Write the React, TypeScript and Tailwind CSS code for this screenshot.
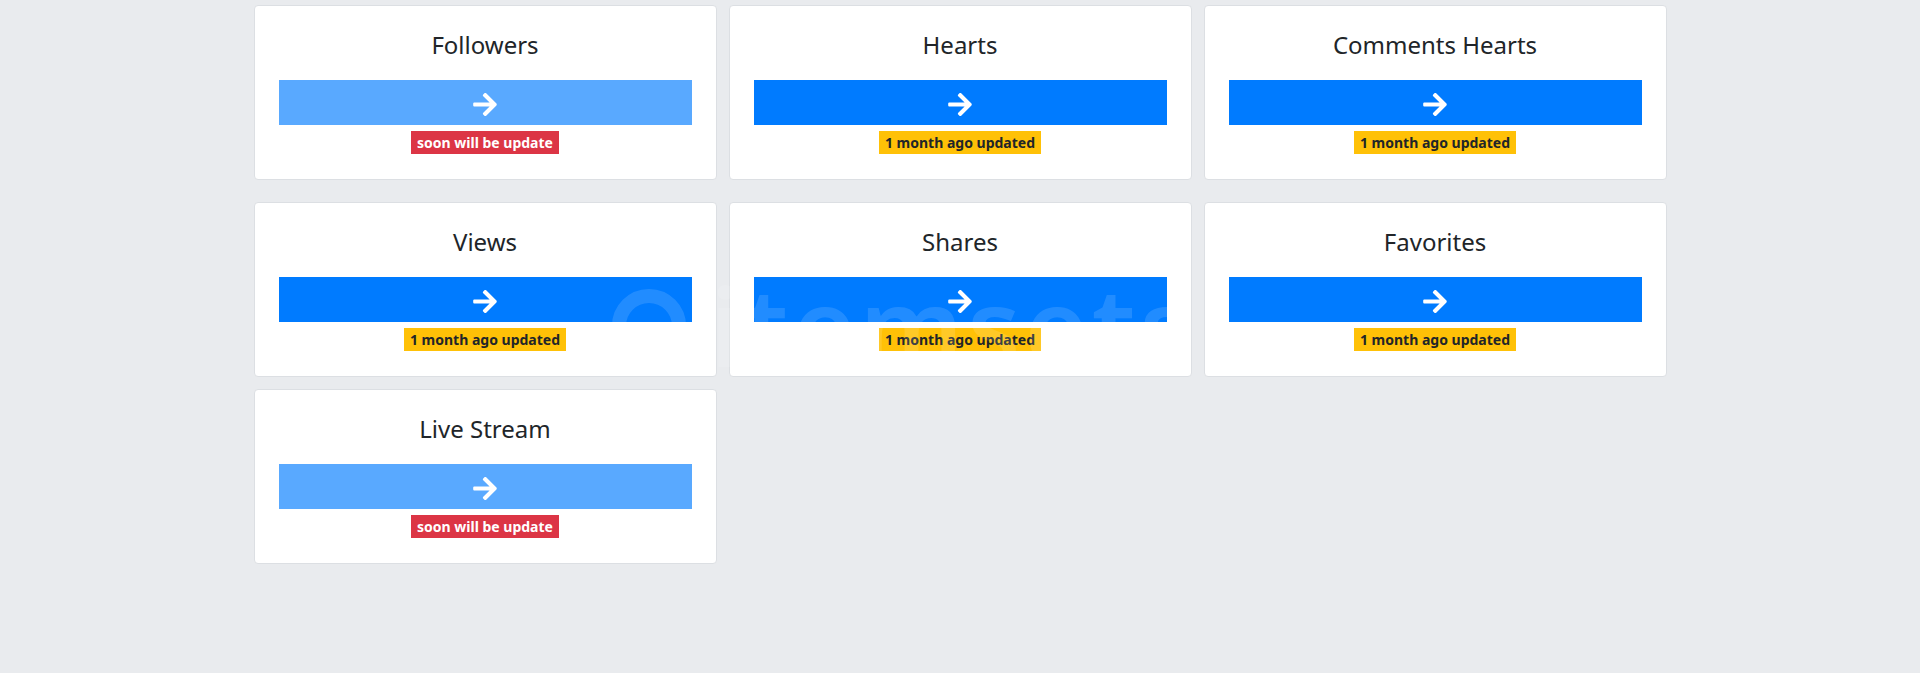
import React from 'react';

type Stat = {
	title: string;
	ready: boolean;
};

const rows: Stat[][] = [
	[
		{ title: 'Followers', ready: false },
		{ title: 'Hearts', ready: true },
		{ title: 'Comments Hearts', ready: true },
	],
	[
		{ title: 'Views', ready: true },
		{ title: 'Shares', ready: true },
		{ title: 'Favorites', ready: true },
	],
	[{ title: 'Live Stream', ready: false }],
];

// font awesome 5 solid arrow-right
const ArrowRight = () => (
	<svg viewBox="0 0 448 512" className="w-[24px] h-[27px] fill-white">
		<path d="M190.5 66.9l22.2-22.2c9.4-9.4 24.6-9.4 33.9 0L441 239c9.4 9.4 9.4 24.6 0 33.9L246.6 467.3c-9.4 9.4-24.6 9.4-33.9 0l-22.2-22.2c-9.5-9.5-9.3-25 .4-34.3L311.4 296H24c-13.3 0-24-10.7-24-24v-32c0-13.3 10.7-24 24-24h287.4L190.9 101.2c-9.8-9.3-10-24.8-.4-34.3z" />
	</svg>
);

const StatCard = ({ title, ready }: Stat) => {
	return (
		<div className="bg-white border border-[#dcdfe3] rounded-[4px] px-6 pt-6 pb-[25px] text-center">
			<h4 className="text-[24px] leading-[29px] font-normal text-[#212529] mb-[21px]">
				{title}
			</h4>
			<div
				className={
					ready
						? 'h-[45px] w-full bg-[#007bff] flex items-center justify-center pt-[4px]'
						: 'h-[45px] w-full bg-[#59a9ff] flex items-center justify-center pt-[4px]'
				}
			>
				<ArrowRight />
			</div>
			<div className="mt-[6px] flex justify-center">
				{ready ? (
					<span className="h-[23px] px-[6px] bg-[#ffc107] text-[#212529] text-[14px] font-bold leading-[23px]">
						1 month ago updated
					</span>
				) : (
					<span className="h-[23px] px-[6px] bg-[#dc3545] text-white text-[14px] font-bold leading-[23px]">
						soon will be update
					</span>
				)}
			</div>
		</div>
	);
};

const App = () => {
	return (
		<div
			className="relative min-h-screen bg-[#e9ebee] overflow-hidden"
			style={{ fontFamily: '"Noto Sans", "Open Sans", sans-serif' }}
		>
			<div className="w-[1413px] mx-auto pt-[5px]">
				{rows.map((row, i) => (
					<div
						key={i}
						className={
							i === 0
								? 'grid grid-cols-3 gap-x-3'
								: i === 1
									? 'grid grid-cols-3 gap-x-3 mt-[22px]'
									: 'grid grid-cols-3 gap-x-3 mt-3'
						}
					>
						{row.map((s) => (
							<StatCard key={s.title} {...s} />
						))}
					</div>
				))}
			</div>

			{/* faint watermark over the middle row */}
			<div className="pointer-events-none absolute left-[612px] top-[272px] flex items-center gap-6 text-white opacity-[0.13]">
				<div className="w-[74px] h-[74px] rounded-full border-[14px] border-white" />
				<span className="text-[108px] leading-none font-semibold tracking-[4px]">
					itemsets
				</span>
			</div>
		</div>
	);
};

export default App;
